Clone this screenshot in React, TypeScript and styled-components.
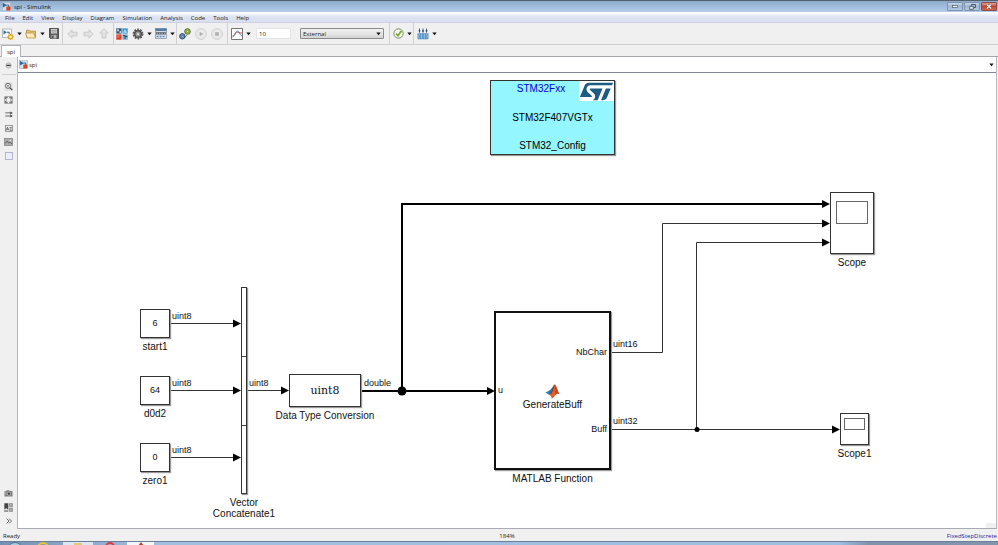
import React from "react";
import styled, { createGlobalStyle, css } from "styled-components";
import { SiStmicroelectronics } from "react-icons/si";

const Global = createGlobalStyle`
  * { box-sizing: border-box; }
  html, body { margin: 0; padding: 0; background: #f0f0f0; }
  body, button, input, select {
    font-family: "Open Sans", "Noto Sans", sans-serif;
    font-size: 6px;
    line-height: 8px;
    color: #222;
  }
  button { border: 0; padding: 0; margin: 0; background: none; }
  svg { display: block; }
`;

const Window = styled.div`
  display: flex;
  flex-direction: column;
  height: 100vh;
  overflow: hidden;
  background: #f0f0f0;
`;

/* ---------- title bar ---------- */
const TitleBar = styled.header`
  display: flex;
  align-items: center;
  flex: none;
  height: 12px;
  padding: 0 1px 0 2px;
  gap: 3px;
  border-top: 1px solid #53606f;
  background: linear-gradient(#8fabcb, #9db9d9 40%, #b4cce8);
`;
const Title = styled.h1`
  flex: 1;
  margin: 0;
  font-size: 6px;
  font-weight: 400;
  color: #111;
`;
const WindowButtons = styled.div`
  display: flex;
  gap: 1px;
`;
const WindowButton = styled.button<{ $close?: boolean }>`
  display: flex;
  align-items: center;
  justify-content: center;
  width: 16px;
  height: 9px;
  border: 1px solid ${(p) => (p.$close ? "#8d4a4c" : "#7f93ad")};
  border-radius: 1px;
  background: ${(p) =>
    p.$close
      ? "linear-gradient(#e0a090, #c8452c 50%, #d2694c)"
      : "linear-gradient(#c6d6ea, #9db6d3 50%, #b3cae4)"};
`;

/* ---------- menu bar ---------- */
const MenuBar = styled.nav`
  display: flex;
  align-items: center;
  flex: none;
  height: 11px;
  padding: 1px 5px 0;
  gap: 8px;
  border-top: 1px solid #fff;
  border-bottom: 1px solid #cdd2de;
  background: linear-gradient(#fafbfe, #dde2f3 45%, #d9dff1);
`;
const MenuItem = styled.button``;

/* ---------- tool bar ---------- */
const ToolBar = styled.div`
  display: flex;
  flex: none;
  height: 22px;
  border-bottom: 1px solid #cfcfcf;
  background: #f0f0f0;
`;
const ToolGroup = styled.div<{ $start?: number; $end?: number; $last?: boolean }>`
  display: flex;
  align-items: center;
  padding-left: ${(p) => p.$start ?? 0}px;
  padding-right: ${(p) => p.$end ?? 0}px;
  border-right: ${(p) => (p.$last ? 0 : 1)}px solid #d0d0d0;
`;
const ToolButton = styled.button`
  display: flex;
  align-items: center;
  justify-content: center;
  width: 16px;
  height: 16px;
`;
const CaretButton = styled.button`
  display: flex;
  align-items: center;
  justify-content: center;
  width: 7px;
  height: 16px;
`;
const StopTime = styled.input`
  width: 35px;
  height: 11px;
  margin-left: 4px;
  padding: 0 2px;
  border: 1px solid #e2e4e8;
  border-radius: 1px;
  background: #fff;
`;
const ModeBox = styled.div`
  display: grid;
  align-items: center;
  width: 84px;
  margin-left: 9px;
  > * { grid-area: 1 / 1; }
  > svg { justify-self: end; margin-right: 3px; pointer-events: none; }
`;
const ModeSelect = styled.select`
  appearance: none;
  width: 100%;
  height: 11px;
  padding: 0 2px;
  border: 1px solid #8a8a8a;
  border-radius: 1px;
  background: linear-gradient(#f0f0f0, #e6e6e6 50%, #d3d3d3);
`;

/* ---------- tabs, side bar, breadcrumb ---------- */
const TabStrip = styled.div`
  display: flex;
  align-items: flex-end;
  flex: none;
  height: 12px;
  padding-left: 1px;
  border-bottom: 1px solid #a5a6ab;
`;
const Tab = styled.button`
  width: 20px;
  height: 12px;
  margin-bottom: -1px;
  border: 1px solid #b2b4bb;
  border-bottom: 0;
  background: #fff;
`;
const Workspace = styled.div`
  display: flex;
  flex: 1;
  min-height: 0;
  padding-right: 1px;
`;
const SideBar = styled.aside`
  display: flex;
  flex-direction: column;
  align-items: center;
  width: 18px;
  padding: 1px 0;
  border-right: 1px solid #b4b6bd;
`;
const SideButton = styled.button`
  display: flex;
  align-items: center;
  justify-content: center;
  width: 14px;
  height: 14px;
`;
const SideTools = styled.div<{ $bottom?: boolean }>`
  display: flex;
  flex-direction: column;
  ${(p) =>
    p.$bottom
      ? css`margin-top: auto;`
      : css`
          margin-top: 2px;
          padding-top: 4px;
          border-top: 1px solid #d0d0d0;
        `}
`;
const Editor = styled.main`
  display: flex;
  flex-direction: column;
  flex: 1;
  min-width: 0;
  border-right: 1px solid #b9bbc4;
  border-bottom: 1px solid #a9abb3;
  background: #fff;
`;
const Breadcrumb = styled.div`
  display: flex;
  align-items: center;
  flex: none;
  height: 16px;
  padding: 0 1px;
  gap: 1px;
  border-bottom: 1px solid #82899a;
`;
const Path = styled.span`
  flex: 1;
`;

/* ---------- diagram ---------- */
const Sheet = styled.div`
  position: relative;
  flex: 1;
  min-height: 0;
  overflow: hidden;
  font-family: "Liberation Sans", Arial, sans-serif;
  color: #111;
`;
const Wires = styled.svg`
  position: absolute;
  inset: 0;
  width: 100%;
  height: 100%;
`;
type Box = { $x: number; $y: number; $w: number; $h: number };
const BlockName = styled.h2`
  position: absolute;
  top: calc(100% + 4px);
  left: 50%;
  transform: translateX(-50%);
  margin: 0;
  font-size: 10px;
  line-height: 11px;
  font-weight: 400;
  text-align: center;
  white-space: pre;
`;
const Block = styled.section<Box & { $heavy?: boolean; $fill?: string }>`
  position: absolute;
  left: ${(p) => p.$x}px;
  top: ${(p) => p.$y}px;
  width: ${(p) => p.$w}px;
  height: ${(p) => p.$h}px;
  display: flex;
  flex-direction: column;
  align-items: center;
  justify-content: center;
  border: ${(p) => (p.$heavy ? "2px solid #111" : "1px solid #333")};
  background: ${(p) => p.$fill ?? "#fff"};
  box-shadow: 1px 1px 1px #999;
  font-size: 9px;
  line-height: 11px;
  > ${BlockName} { margin-top: ${(p) => (p.$heavy ? 1 : 0)}px; }
`;
const SignalLabel = styled.span<{ $x: number; $y: number }>`
  position: absolute;
  left: ${(p) => p.$x}px;
  top: ${(p) => p.$y}px;
  font-size: 9px;
  line-height: 10px;
`;
const TypeText = styled.span`
  font-family: "DejaVu Serif", serif;
  font-size: 11px;
`;
const Segments = styled.div`
  flex: 1;
  align-self: stretch;
  display: grid;
  grid-template-rows: repeat(3, 1fr);
  > * + * { border-top: 1px solid #444; }
`;
const ScopeBlock = styled(Block)<{ $pad: string }>`
  justify-content: flex-start;
  align-items: stretch;
  padding: ${(p) => p.$pad};
`;
const ScopeScreen = styled.div<{ $h: number }>`
  height: ${(p) => p.$h}px;
  border: 1px solid #666;
`;
const FunctionGrid = styled.div`
  display: grid;
  grid-template-rows: 1fr 66px 1fr;
  width: 100%;
  height: 100%;
  padding: 0 2px;
`;
const Port = styled.span<{ $side: "start" | "end" }>`
  align-self: ${(p) => p.$side};
  justify-self: end;
`;
const FunctionRow = styled.div`
  display: grid;
  align-items: center;
  > * { grid-area: 1 / 1; }
`;
const FunctionTitle = styled.div`
  display: flex;
  flex-direction: column;
  align-items: center;
  padding-top: 12px;
  font-size: 10px;
`;
const ConfigLines = styled.div`
  display: flex;
  flex-direction: column;
  justify-content: space-between;
  width: 100%;
  height: 100%;
  padding: 2px 0 3px;
  font-size: 10px;
  text-align: center;
  color: #000;
`;
const Family = styled.span`
  padding-right: 23px;
  color: #0000d8;
`;
const LogoBadge = styled.div`
  position: absolute;
  top: 0;
  right: 0;
  display: flex;
  align-items: center;
  justify-content: center;
  width: 35px;
  height: 20px;
  overflow: hidden;
  background: #fff;
  color: #1d5c82;
`;
const Grip = styled.div`
  position: absolute;
  right: 0;
  bottom: 0;
  width: 10px;
  height: 5px;
  background: #f0f0f0;
`;

/* ---------- status bar, task bar ---------- */
const StatusBar = styled.footer`
  display: grid;
  grid-template-columns: 1fr auto 1fr;
  align-items: center;
  flex: none;
  height: 12px;
  padding: 2px 1px 0 3px;
`;
const Zoom = styled.span`
  padding-left: 14px;
`;
const Solver = styled.a`
  justify-self: end;
  color: #23239a;
  text-decoration: none;
`;
const TaskBar = styled.div`
  display: flex;
  flex: none;
  height: 4px;
  padding-left: 6px;
  border-top: 1px solid #6b7f99;
  background: linear-gradient(90deg, #7690b3, #a3bfe0 16%, #9dbfe2 84%, #8093ad 87%, #8395ad);
`;
const TaskItem = styled.button<{ $w: number; $bg?: string }>`
  display: flex;
  justify-content: center;
  width: ${(p) => p.$w}px;
  height: 3px;
  overflow: hidden;
  background: ${(p) => p.$bg ?? "transparent"};
`;

/* ---------- icons ---------- */
const Caret = () => (
  <svg width="5" height="4" viewBox="0 0 5 4" aria-hidden="true">
    <path d="M.3.600h4.400L2.500 3.300z" fill="#111" />
  </svg>
);

const ModelIcon = ({ size = 9 }: { size?: number }) => (
  <svg width={size} height={size} viewBox="0 0 9 9" aria-hidden="true">
    <rect x=".4" y=".4" width="8.200" height="8.200" fill="#d3e0ec" stroke="#a7b4c2" strokeWidth=".6" />
    <path d="M.8.800l4.200 2.400L.8 5.600z" fill="#1b6ca8" />
    <path d="M4.500 3h2.200v2" fill="none" stroke="#444" strokeWidth=".8" />
    <rect x="4.300" y="4.500" width="4.100" height="4" rx=".5" fill="#d4442a" />
  </svg>
);

const toolIcons: Record<string, React.ReactNode> = {
  new: (
    <svg width="12" height="12" viewBox="0 0 12 12">
      <rect x=".5" y="1" width="9" height="8.500" fill="#fafbfc" stroke="#a4abb5" strokeWidth=".8" />
      <path d="M1.500 2.200l3.500 2.100-3.500 2.100z" fill="#2a6f9f" />
      <path d="M5 4.200h2.200v2" stroke="#333" strokeWidth=".8" fill="none" />
      <path d="M8.500 5.500l.9 1.200 1.600-.2-.2 1.600 1.100.9-1.200.9.100 1.500-1.500-.2-1 1-.9-1.100-1.500.1.300-1.500L5.100 9l1.200-1-.2-1.400 1.500.1z" fill="#dda01f" />
      <circle cx="8.500" cy="8.900" r="1.400" fill="#fff3b5" />
    </svg>
  ),
  open: (
    <svg width="12" height="10" viewBox="0 0 12 10">
      <path d="M1.500 1.200h3l1 1h5v6h-9z" fill="#e3c478" stroke="#a2782d" strokeWidth=".7" />
      <path d="M.6 4h8.200l1.700 5H2.200z" fill="#fbeabc" stroke="#b98a35" strokeWidth=".7" />
    </svg>
  ),
  save: (
    <svg width="10" height="11" viewBox="0 0 10 11">
      <path d="M.5.5h9v10h-8l-1-1z" fill="#5c5c5c" stroke="#3d3d3d" strokeWidth=".8" />
      <rect x="2" y="1" width="6" height="4.500" fill="#cfcfcf" />
      <path d="M2.500 2.500h5M2.500 4h5" stroke="#888" strokeWidth=".6" />
      <rect x="2.500" y="7" width="5" height="3.500" fill="#b8b8b8" />
      <rect x="3.200" y="7.600" width="1.400" height="2.500" fill="#444" />
    </svg>
  ),
  back: (
    <svg width="11" height="10" viewBox="0 0 11 10">
      <path d="M5 .8v2.400h5v3.600H5v2.400L.8 5z" fill="#e3e3e3" stroke="#c2c2c2" strokeWidth=".8" />
    </svg>
  ),
  forward: (
    <svg width="11" height="10" viewBox="0 0 11 10">
      <path d="M6 .8v2.400H1v3.600h5v2.400L10.200 5z" fill="#e3e3e3" stroke="#c2c2c2" strokeWidth=".8" />
    </svg>
  ),
  up: (
    <svg width="10" height="11" viewBox="0 0 10 11">
      <path d="M5 .8L9.200 5H7v5H3V5H.8z" fill="#e3e3e3" stroke="#c2c2c2" strokeWidth=".8" />
    </svg>
  ),
  library: (
    <svg width="12" height="12" viewBox="0 0 12 12">
      <rect x=".3" y=".3" width="5.300" height="5.300" fill="#35546f" />
      <path d="M1 1.200h2v2H1zM3.500 3h1.500v2H3.500z" fill="#b9d3e6" />
      <rect x="6.400" y=".3" width="5.300" height="5.300" fill="#3b94cf" />
      <path d="M7 4.800L9 1l2.200 3.800z" fill="#aadcf5" />
      <rect x=".3" y="6.400" width="5.300" height="5.300" fill="#d6432b" />
      <rect x="1.300" y="7.400" width="2" height="2" fill="#e9816d" />
      <rect x="6.400" y="6.400" width="5.300" height="5.300" fill="#7ba7c6" />
      <path d="M7 7.500h2v3.500M9 8.500h2.500" stroke="#1e4969" strokeWidth=".9" fill="none" />
    </svg>
  ),
  settings: (
    <svg width="12" height="12" viewBox="0 0 12 12">
      <circle cx="6" cy="6" r="4.600" fill="none" stroke="#555" strokeWidth="1.600" strokeDasharray="1.800 1.090" />
      <circle cx="6" cy="6" r="3.300" fill="#aaa" stroke="#4b4b4b" strokeWidth="1.500" />
      <circle cx="6" cy="6" r="1.500" fill="#eee" stroke="#555" strokeWidth=".5" />
    </svg>
  ),
  explorer: (
    <svg width="12" height="11" viewBox="0 0 12 11">
      <rect x=".5" y=".5" width="11" height="10" fill="#dfe8f0" stroke="#7c8b99" strokeWidth=".7" />
      <rect x=".5" y=".5" width="11" height="2.600" fill="#557ca0" />
      <rect x="1" y="4.200" width="10" height="2.300" fill="#4a5863" />
      <path d="M1.500 5.300h9" stroke="#fff" strokeWidth=".6" strokeDasharray="1.500 1" />
      <path d="M1.500 8.500h9" stroke="#5e88aa" strokeWidth="1.300" strokeDasharray="2 1" />
    </svg>
  ),
  update: (
    <svg width="12" height="12" viewBox="0 0 12 12">
      <circle cx="8.500" cy="3.500" r="2.800" fill="#a9c457" stroke="#45591d" strokeWidth=".9" />
      <circle cx="8.500" cy="3.500" r="1" fill="#eaf2cf" stroke="#45591d" strokeWidth=".5" />
      <circle cx="3.300" cy="8.300" r="2.700" fill="#6c97b9" stroke="#23435e" strokeWidth=".9" />
      <circle cx="3.300" cy="8.300" r=".9" fill="#e3eef6" stroke="#23435e" strokeWidth=".5" />
      <path d="M5.500 9.500a4 4 0 002-2.200" stroke="#333" fill="none" strokeWidth=".8" />
    </svg>
  ),
  run: (
    <svg width="12" height="12" viewBox="0 0 12 12">
      <circle cx="6" cy="6" r="5.400" fill="#e9e9e9" stroke="#c8c8c8" strokeWidth=".8" />
      <path d="M4.600 3.700L8.200 6 4.600 8.300z" fill="#b0b0b0" />
    </svg>
  ),
  stop: (
    <svg width="12" height="12" viewBox="0 0 12 12">
      <circle cx="6" cy="6" r="5.400" fill="#e9e9e9" stroke="#c8c8c8" strokeWidth=".8" />
      <rect x="4.200" y="4.200" width="3.600" height="3.600" fill="#b0b0b0" />
    </svg>
  ),
  inspector: (
    <svg width="12" height="12" viewBox="0 0 12 12">
      <rect x=".6" y=".6" width="10.800" height="10.800" fill="#fff" stroke="#555" strokeWidth=".8" />
      <path d="M1.500 9c2 0 2-5 4-5s2 1 5.500 1" fill="none" stroke="#cf4a3c" strokeWidth=".9" />
      <path d="M1.500 8c2-1 2.500-.5 3.500-3s2-2.500 3-1 1 3 3 4" fill="none" stroke="#3a6fae" strokeWidth=".8" />
    </svg>
  ),
  check: (
    <svg width="11" height="11" viewBox="0 0 11 11">
      <circle cx="5.500" cy="5.500" r="4.700" fill="#f2f5ea" stroke="#7d8a6c" strokeWidth="1" />
      <path d="M3 5.500l2 2.200L8.300 3" fill="none" stroke="#7aa32c" strokeWidth="1.600" />
    </svg>
  ),
  deploy: (
    <svg width="12" height="12" viewBox="0 0 12 12">
      <path d="M2.500.5v4M6 .5v4M9.500.5v4" stroke="#2b4a66" strokeWidth=".9" />
      <path d="M1.300 2.600h2.400L2.500 4.600zM4.800 2.600h2.400L6 4.600zM8.300 2.600h2.400L9.500 4.600z" fill="#2b4a66" />
      <rect x=".5" y="5.200" width="11" height="6" rx=".6" fill="#5490c0" />
      <path d="M2 6v4.500M4.700 6v4.500M7.300 6v4.500M10 6v4.500" stroke="#b5d6ee" strokeWidth=".8" />
    </svg>
  ),
};

const sideIcons: Record<string, React.ReactNode> = {
  hide: (
    <svg width="7" height="7" viewBox="0 0 7 7">
      <circle cx="3.500" cy="3.500" r="2.600" fill="#ddd" stroke="#999" strokeWidth=".7" />
      <path d="M1.500 2.800h4v1.200h-4z" fill="#333" />
    </svg>
  ),
  zoom: (
    <svg width="9" height="9" viewBox="0 0 9 9">
      <rect x=".3" y=".3" width="8.400" height="8.400" fill="#dedede" />
      <circle cx="4" cy="3.800" r="2.500" fill="#fff" stroke="#555" strokeWidth=".9" />
      <path d="M2.900 3.800h2.200M4 2.700v2.200" stroke="#555" strokeWidth=".7" />
      <path d="M5.800 5.700l2.500 2.500" stroke="#444" strokeWidth="1.200" />
    </svg>
  ),
  fit: (
    <svg width="9" height="8" viewBox="0 0 9 8">
      <rect x=".4" y=".4" width="8.200" height="7.200" fill="#777" />
      <path d="M3.300 2h2.400L4.500.8zM3.300 6h2.400L4.500 7.200zM2 2.800v2.400L.8 4zM7 2.800v2.400L8.200 4z" fill="#fff" />
      <rect x="2.500" y="2.200" width="4" height="3.600" fill="#f4f4f4" />
    </svg>
  ),
  sample: (
    <svg width="8" height="7" viewBox="0 0 8 7">
      <path d="M.3 1.900h5.500M.3 5h5.500" stroke="#444" strokeWidth=".8" />
      <path d="M5.300.4L7.800 1.900 5.300 3.400zM5.300 3.600L7.800 5 5.300 6.500z" fill="#444" />
    </svg>
  ),
  annotation: (
    <svg width="8" height="7" viewBox="0 0 8 7">
      <rect x=".4" y=".4" width="7.200" height="6.200" fill="#eee" stroke="#777" strokeWidth=".7" />
      <path d="M1.300 5.200l1.200-3 1.200 3M1.700 4.300h1.600M4.700 2.500h2M4.700 4h2M4.700 5.300h2" fill="none" stroke="#444" strokeWidth=".7" />
    </svg>
  ),
  image: (
    <svg width="9" height="8" viewBox="0 0 9 8">
      <rect x=".4" y=".4" width="8.200" height="7.200" fill="#aaa" stroke="#808080" strokeWidth=".7" />
      <path d="M1.200 5.500l2-2.500 1.500 2 1.200-.8L8 6" fill="none" stroke="#555" strokeWidth=".8" />
      <circle cx="6.200" cy="2.500" r=".8" fill="#eee" />
    </svg>
  ),
  area: (
    <svg width="8" height="8" viewBox="0 0 8 8">
      <rect x=".5" y=".5" width="7" height="7" fill="#eceefc" stroke="#a4a8c4" strokeWidth=".8" />
    </svg>
  ),
  camera: (
    <svg width="9" height="7" viewBox="0 0 9 7">
      <path d="M.5 1h2V.2h3V1h3v5.500h-8z" fill="#808080" />
      <circle cx="5" cy="3.700" r="1.700" fill="#444" stroke="#ddd" strokeWidth=".6" />
      <path d="M1 2h1.500M1 4h1.500" stroke="#ddd" strokeWidth=".6" />
    </svg>
  ),
  browser: (
    <svg width="9" height="9" viewBox="0 0 8 8">
      <path d="M.3.3h3.500v5.500L2 4.600.3 5.800z" fill="#444" />
      <path d="M4.700.5h3v2.700h-3zM4.700 4.500h3v3h-3zM.5 6.500h3v1.200h-3z" fill="#aaa" stroke="#777" strokeWidth=".5" />
    </svg>
  ),
  more: (
    <svg width="6" height="6" viewBox="0 0 6 6">
      <path d="M.7.6L3 3 .7 5.400M3.200.6L5.500 3 3.200 5.400" fill="none" stroke="#444" strokeWidth=".8" />
    </svg>
  ),
};

const MatlabLogo = () => (
  <svg width="15" height="15" viewBox="0 0 15 15" aria-hidden="true">
    <path d="M.3 8.500l4.200-2c1.200-.3 2-1.500 3-3L6.800 9.500 4 10.800z" fill="#2f83b8" />
    <path d="M4.500 6.500C6.800 5.200 8 1.400 9.600.4L6.800 9.500 4 10.800z" fill="#2b6c9b" />
    <path d="M4 10.800c2-.6 2.800-3.500 3.800-6C8.600 2.700 9 .7 9.800.4c1.200.3 2.700 6.300 4.900 9.900-1.700-1.200-2.800-.8-4.200.8-1.300 1.500-2.200 3-3.700 3.500-.3-1.600-1.200-3.200-2.800-3.800z" fill="#dd5f2c" />
    <path d="M9.800.4c-.7 2-1 4.500-2.100 6.500-.7 1.800-1.700 3.300-3.700 3.900 2-.6 2.800-3.500 3.800-6C8.600 2.700 9 .7 9.800.4z" fill="#7b2c20" />
    <path d="M9.800.4c.5 3.100.8 7.100.7 10.700 1.400-1.600 2.500-2 4.200-.8C12.500 6.700 11 .7 9.800.4z" fill="#c2451f" />
  </svg>
);

/* ---------- data ---------- */
const menus = ["File", "Edit", "View", "Display", "Diagram", "Simulation", "Analysis", "Code", "Tools", "Help"];

const constants = [
  { name: "start1", value: "6", y: 236 },
  { name: "d0d2", value: "64", y: 303 },
  { name: "zero1", value: "0", y: 370 },
];

const signals = [
  { text: "uint8", x: 154, y: 238 },
  { text: "uint8", x: 154, y: 305 },
  { text: "uint8", x: 154, y: 372 },
  { text: "uint8", x: 231, y: 305 },
  { text: "double", x: 346, y: 305 },
  { text: "uint16", x: 595, y: 266 },
  { text: "uint32", x: 595, y: 343 },
];

const wires = [
  { d: "M152 250.500H218", tip: [223, 250.5] },
  { d: "M152 317.500H218", tip: [223, 317.5] },
  { d: "M152 384.500H218", tip: [223, 384.5] },
  { d: "M229 317.500H266", tip: [271, 317.5] },
  { d: "M343 318H472", tip: [477, 318], heavy: true },
  { d: "M384 318V131H806", tip: [812, 131], heavy: true },
  { d: "M593 279.500H644.500V150.500H806", tip: [812, 150.5] },
  { d: "M593 356.500H816", tip: [822, 356.5] },
  { d: "M678.500 356.500V169.500H806", tip: [812, 169.5] },
];

const Tool = ({ icon, label, menu }: { icon: string; label: string; menu?: boolean }) => (
  <>
    <ToolButton aria-label={label}>{toolIcons[icon]}</ToolButton>
    {menu && (
      <CaretButton aria-label={`${label} options`}>
        <Caret />
      </CaretButton>
    )}
  </>
);

const Side = ({ icon }: { icon: string }) => <SideButton aria-label={icon}>{sideIcons[icon]}</SideButton>;

const Diagram = () => (
  <Sheet>
    <Wires aria-hidden="true">
      {wires.map((w) => (
        <g key={w.d}>
          <path d={w.d} fill="none" stroke={w.heavy ? "#000" : "#333"} strokeWidth={w.heavy ? 2 : 1} />
          <path d={`M${w.tip[0]} ${w.tip[1]}l-8-4v8z`} fill="#000" />
        </g>
      ))}
      <circle cx="384" cy="318" r="4.500" />
      <circle cx="679" cy="356.500" r="2.500" />
    </Wires>

    <Block $x={472} $y={7} $w={125} $h={75} $fill="#94f6ff">
      <ConfigLines>
        <Family>STM32Fxx</Family>
        <span>STM32F407VGTx</span>
        <span>STM32_Config</span>
      </ConfigLines>
      <LogoBadge>
        <SiStmicroelectronics size={33} />
      </LogoBadge>
    </Block>

    {constants.map((c) => (
      <Block key={c.name} $x={122} $y={c.y} $w={30} $h={29}>
        {c.value}
        <BlockName>{c.name}</BlockName>
      </Block>
    ))}

    <Block $x={223} $y={214} $w={6} $h={207}>
      <Segments>
        <span />
        <span />
        <span />
      </Segments>
      <BlockName>{"Vector\nConcatenate1"}</BlockName>
    </Block>

    <Block $x={271} $y={301} $w={72} $h={33}>
      <TypeText>uint8</TypeText>
      <BlockName>Data Type Conversion</BlockName>
    </Block>

    <Block $x={476} $y={238} $w={117} $h={159} $heavy>
      <FunctionGrid>
        <Port $side="end">NbChar</Port>
        <FunctionRow>
          <span>u</span>
          <FunctionTitle>
            <MatlabLogo />
            GenerateBuff
          </FunctionTitle>
        </FunctionRow>
        <Port $side="start">Buff</Port>
      </FunctionGrid>
      <BlockName>MATLAB Function</BlockName>
    </Block>

    <ScopeBlock $x={812} $y={119} $w={44} $h={62} $pad="8px 5px">
      <ScopeScreen $h={23} />
      <BlockName>Scope</BlockName>
    </ScopeBlock>
    <ScopeBlock $x={822} $y={340} $w={29} $h={32} $pad="4px 3px">
      <ScopeScreen $h={12} />
      <BlockName>Scope1</BlockName>
    </ScopeBlock>

    {signals.map((s) => (
      <SignalLabel key={`${s.x}-${s.y}`} $x={s.x} $y={s.y}>
        {s.text}
      </SignalLabel>
    ))}
    <Grip />
  </Sheet>
);

export default function App() {
  return (
    <Window>
      <Global />
      <TitleBar>
        <ModelIcon />
        <Title>spi - Simulink</Title>
        <WindowButtons>
          <WindowButton aria-label="Minimize">
            <svg width="6" height="3" viewBox="0 0 6 3">
              <rect x=".5" y=".5" width="5" height="2" fill="#fff" stroke="#4c5a6b" strokeWidth=".7" />
            </svg>
          </WindowButton>
          <WindowButton aria-label="Restore">
            <svg width="7" height="6" viewBox="0 0 7 6">
              <path d="M2.500.5h4v3h-4z" fill="none" stroke="#4c5a6b" />
              <path d="M.7 2.300h3.600v3H.7z" fill="#eee" stroke="#4c5a6b" strokeWidth=".9" />
            </svg>
          </WindowButton>
          <WindowButton $close aria-label="Close">
            <svg width="6" height="5" viewBox="0 0 6 5">
              <path d="M.8.500l4.400 4M5.200.5l-4.400 4" stroke="#5c2a2a" strokeWidth="2" />
              <path d="M.8.500l4.400 4M5.200.5l-4.400 4" stroke="#fff" strokeWidth="1.200" />
            </svg>
          </WindowButton>
        </WindowButtons>
      </TitleBar>

      <MenuBar>
        {menus.map((m) => (
          <MenuItem key={m}>{m}</MenuItem>
        ))}
      </MenuBar>

      <ToolBar>
        <ToolGroup>
          <Tool icon="new" label="New model" menu />
          <Tool icon="open" label="Open" menu />
          <Tool icon="save" label="Save" />
        </ToolGroup>
        <ToolGroup $start={1} $end={1}>
          <Tool icon="back" label="Back" />
          <Tool icon="forward" label="Forward" />
          <Tool icon="up" label="Up to parent" />
        </ToolGroup>
        <ToolGroup>
          <Tool icon="library" label="Library browser" />
          <Tool icon="settings" label="Model configuration" menu />
          <Tool icon="explorer" label="Model explorer" menu />
        </ToolGroup>
        <ToolGroup $end={2}>
          <Tool icon="update" label="Update diagram" />
          <Tool icon="run" label="Run" />
          <Tool icon="stop" label="Stop" />
        </ToolGroup>
        <ToolGroup $start={1} $end={5}>
          <Tool icon="inspector" label="Data inspector" menu />
          <StopTime aria-label="Simulation stop time" defaultValue="10" />
          <ModeBox>
            <ModeSelect aria-label="Simulation mode" defaultValue="External">
              <option>External</option>
            </ModeSelect>
            <Caret />
          </ModeBox>
        </ToolGroup>
        <ToolGroup>
          <Tool icon="check" label="Model advisor" menu />
        </ToolGroup>
        <ToolGroup $start={1} $last>
          <Tool icon="deploy" label="Build model" menu />
        </ToolGroup>
      </ToolBar>

      <TabStrip>
        <Tab>spi</Tab>
      </TabStrip>

      <Workspace>
        <SideBar>
          <Side icon="hide" />
          <SideTools>
            {["zoom", "fit", "sample", "annotation", "image", "area"].map((i) => (
              <Side key={i} icon={i} />
            ))}
          </SideTools>
          <SideTools $bottom>
            {["camera", "browser", "more"].map((i) => (
              <Side key={i} icon={i} />
            ))}
          </SideTools>
        </SideBar>
        <Editor>
          <Breadcrumb>
            <ModelIcon />
            <Path>spi</Path>
            <CaretButton aria-label="Recent models">
              <Caret />
            </CaretButton>
          </Breadcrumb>
          <Diagram />
        </Editor>
      </Workspace>

      <StatusBar>
        <span>Ready</span>
        <Zoom>184%</Zoom>
        <Solver href="#solver">FixedStepDiscrete</Solver>
      </StatusBar>

      <TaskBar>
        <TaskItem $w={17} aria-label="Start">
          <svg width="16" height="16" viewBox="0 0 16 16">
            <circle cx="8" cy="8" r="7.500" fill="#a5cfe0" stroke="#4c7490" />
          </svg>
        </TaskItem>
        <TaskItem $w={40} aria-label="Browser">
          <svg width="12" height="12" viewBox="-6 0 12 12">
            <circle cx="0" cy="6" r="5" fill="none" stroke="#e5c33c" strokeWidth="2" />
          </svg>
        </TaskItem>
        <TaskItem $w={30} $bg="#dde7f2" aria-label="Explorer">
          <svg width="8" height="3" viewBox="0 0 8 3">
            <rect y="1" width="8" height="2" fill="#e3c77a" />
          </svg>
        </TaskItem>
        <TaskItem $w={34} aria-label="Opera">
          <svg width="10" height="10" viewBox="0 0 10 10">
            <circle cx="5" cy="5" r="4" fill="none" stroke="#d6404a" strokeWidth="2" />
          </svg>
        </TaskItem>
        <TaskItem $w={27} $bg="#f4f6fa" aria-label="MATLAB">
          <svg width="6" height="4" viewBox="0 0 6 4">
            <path d="M0 4L3 0l3 4z" fill="#b8432c" />
          </svg>
        </TaskItem>
      </TaskBar>
    </Window>
  );
}
